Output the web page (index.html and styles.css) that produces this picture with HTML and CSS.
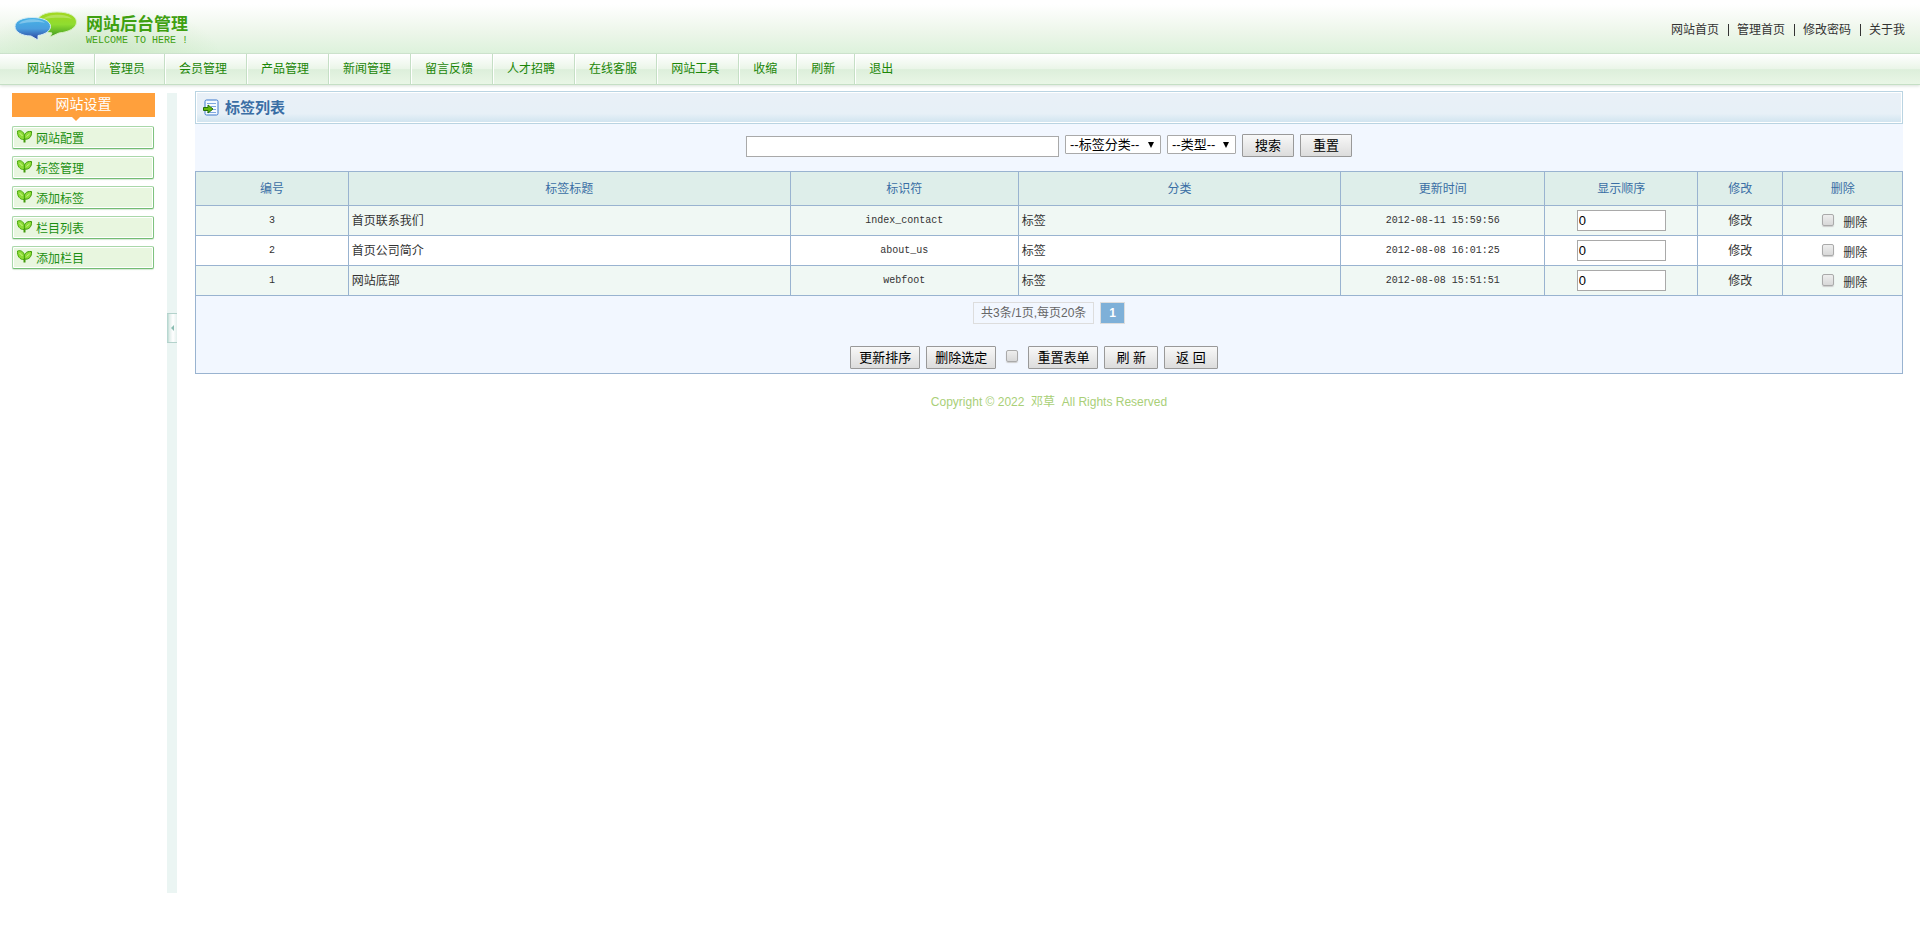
FILE: index.html
```html
<!DOCTYPE html>
<html lang="zh-CN">
<head>
<meta charset="utf-8">
<title>网站后台管理</title>
<link rel="stylesheet" href="styles.css">
</head>
<body>
<svg class="sprite" aria-hidden="true">
  <symbol id="leaf" viewBox="0 0 15 13">
    <path d="M7.500 12.500V8" stroke="#3f9a08" stroke-width="2" fill="none"/>
    <path d="M7 9.500C3 10 0 6 .5 1C4 -.3 8 2 7.500 8Z" fill="#8ddc35" stroke="#4aa80e"/>
    <path d="M7.500 9C6.500 4 9 1 14.500 1.500C15 6.500 12 10 7.500 9Z" fill="#8ddc35" stroke="#3f9a08"/>
    <path d="M2.500 3L5.500 6M12.500 4L9.500 6.500" stroke="#c9f58a" fill="none"/>
  </symbol>
</svg>
<header class="top">
  <a class="brand" href="#">
    <svg class="logo" viewBox="0 0 64 30" aria-hidden="true">
      <defs>
        <linearGradient id="g" x1="0" y1="0" x2="0" y2="1"><stop offset="0" stop-color="#a4d820"/><stop offset=".5" stop-color="#8fdc30"/><stop offset="1" stop-color="#3f9a20"/></linearGradient>
        <linearGradient id="b" x1="0" y1="0" x2="0" y2="1"><stop offset="0" stop-color="#45b4e6"/><stop offset=".5" stop-color="#4a9ede"/><stop offset="1" stop-color="#2a3f9c"/></linearGradient>
      </defs>
      <path d="M43 1C55 1 62.500 5 62.500 11C62.500 17 55 21 45 22L36 26L38 22C30 21 23 17 23 11C23 5 31 1 43 1Z" fill="url(#g)" stroke="#d6f0c0"/>
      <path d="M29 8C34 3 52 2 58 8C50 6 38 7 29 8Z" fill="#fff" opacity=".25"/>
      <path d="M18 6.500C29 6.500 36.500 10 36.500 15.500C36.500 20 31 23.500 24 24.500L24 29L17 25C8 25 1 21 1 15.500C1 10 8 6.500 18 6.500Z" fill="url(#b)" stroke="#d5ecf5"/>
      <path d="M5 13C9 7 26 7 31 12C25 10 13 11 5 13Z" fill="#fff" opacity=".3"/>
    </svg>
    <span class="brand-text"><strong>网站后台管理</strong><span class="mono">WELCOME TO HERE !</span></span>
  </a>
  <nav class="quick"><a href="#">网站首页</a><a href="#">管理首页</a><a href="#">修改密码</a><a href="#">关于我</a></nav>
</header>
<nav class="menu">
  <a href="#">网站设置</a><a href="#">管理员</a><a href="#">会员管理</a><a href="#">产品管理</a><a href="#">新闻管理</a><a href="#">留言反馈</a><a href="#">人才招聘</a><a href="#">在线客服</a><a href="#">网站工具</a><a href="#">收缩</a><a href="#">刷新</a><a href="#">退出</a>
</nav>
<div class="layout">
  <aside class="side">
    <h2>网站设置</h2>
    <a href="#"><svg aria-hidden="true"><use href="#leaf"/></svg>网站配置</a>
    <a href="#"><svg aria-hidden="true"><use href="#leaf"/></svg>标签管理</a>
    <a href="#"><svg aria-hidden="true"><use href="#leaf"/></svg>添加标签</a>
    <a href="#"><svg aria-hidden="true"><use href="#leaf"/></svg>栏目列表</a>
    <a href="#"><svg aria-hidden="true"><use href="#leaf"/></svg>添加栏目</a>
  </aside>
  <div class="splitter"><button type="button" aria-label="收缩"></button></div>
  <main class="main">
    <h1>
      <svg viewBox="0 0 16 17" aria-hidden="true">
        <rect x="2" y="1" width="13" height="15" rx="1.500" fill="#f4faff" stroke="#3d78cc"/>
        <path d="M4 4.500H13M8 7.500H13M10 10.500H13M4 13.500H13" stroke="#7ea8e0"/>
        <path d="M.5 8.500H5V6L10 10L5 14V11.500H.5Z" fill="#63b80d" stroke="#26700a"/>
      </svg>标签列表</h1>
    <form class="search">
      <input class="keyword" type="text" aria-label="关键字">
      <select class="kind" aria-label="标签分类"><option>--标签分类--</option></select>
      <select class="type" aria-label="类型"><option>--类型--</option></select>
      <button class="btn" type="button">搜索</button>
      <button class="btn" type="reset">重置</button>
    </form>
    <form class="list">
    <table>
      <colgroup><col class="c-id"><col class="c-title"><col class="c-key"><col class="c-cat"><col class="c-time"><col class="c-order"><col class="c-edit"><col class="c-del"></colgroup>
      <thead><tr><th>编号</th><th>标签标题</th><th>标识符</th><th>分类</th><th>更新时间</th><th>显示顺序</th><th>修改</th><th>删除</th></tr></thead>
      <tbody>
        <tr><td class="mono">3</td><td class="left">首页联系我们</td><td class="mono">index_contact</td><td class="left">标签</td><td class="mono">2012-08-11 15:59:56</td><td><input class="order" type="text" value="0" aria-label="显示顺序 3"></td><td><a href="#">修改</a></td><td><label class="del"><input type="checkbox"><span>删除</span></label></td></tr>
        <tr><td class="mono">2</td><td class="left">首页公司简介</td><td class="mono">about_us</td><td class="left">标签</td><td class="mono">2012-08-08 16:01:25</td><td><input class="order" type="text" value="0" aria-label="显示顺序 2"></td><td><a href="#">修改</a></td><td><label class="del"><input type="checkbox"><span>删除</span></label></td></tr>
        <tr><td class="mono">1</td><td class="left">网站底部</td><td class="mono">webfoot</td><td class="left">标签</td><td class="mono">2012-08-08 15:51:51</td><td><input class="order" type="text" value="0" aria-label="显示顺序 1"></td><td><a href="#">修改</a></td><td><label class="del"><input type="checkbox"><span>删除</span></label></td></tr>
      </tbody>
    </table>
    <div class="panel">
      <div class="pager"><span>共3条/1页,每页20条</span><b>1</b></div>
      <div class="actions">
        <button class="btn" type="button">更新排序</button>
        <button class="btn" type="button">删除选定</button>
        <input type="checkbox" aria-label="全选">
        <button class="btn" type="reset">重置表单</button>
        <button class="btn wide" type="button">刷 新</button>
        <button class="btn wide" type="button">返 回</button>
      </div>
    </div>
    </form>
    <footer>Copyright © 2022 &nbsp;邓草&nbsp; All Rights Reserved</footer>
  </main>
</div>
</body>
</html>
```

FILE: styles.css
```css
* { box-sizing: border-box; }
body { margin: 0; background: #fff; color: #333; font: 12px/18px "Liberation Sans", "Noto Sans CJK SC", sans-serif; }
a { color: inherit; text-decoration: none; }
input, select, button { font-family: inherit; margin: 0; }
.sprite { display: none; }
.mono { font-family: "Liberation Mono", "Noto Sans CJK SC", monospace; font-size: 10px; }

.top { display: flex; justify-content: space-between; align-items: center; height: 54px; padding: 2px 15px 0 14px; border-bottom: 1px solid #c9e2c9;
  background: radial-gradient(ellipse 120px 50px at 100px 54px, rgba(190, 225, 180, .6), transparent), linear-gradient(#fff 8%, #edf6ea 60%, #ddf2dc); }
.brand { display: flex; gap: 8px; color: #3fa010; }
.logo { width: 64px; height: 30px; }
.brand-text { display: flex; flex-direction: column; padding-top: 2px; }
.brand strong { font-size: 17px; line-height: 24px; }
.brand .mono { line-height: 8px; }
.quick { display: flex; padding-top: 4px; }
.quick a { line-height: 12px; }
.quick a + a { margin-left: 9px; padding-left: 8px; border-left: 1px solid #333; }

.menu { display: flex; height: 31px; padding-left: 10px; border-bottom: 1px solid #c5dfc5; color: #1c8608; box-shadow: 0 1px 3px #d8e0d8;
  background: linear-gradient(#fff, #eaf5e8 50%, #ddefdb 52%, #e9f6e6); }
.menu a { padding: 6px 19px 6px 14px; border-right: 1px solid #c5dfc5; box-shadow: 1px 0 #fff; }
.menu a:first-child { padding: 6px 19px 6px 17px; }
.menu a:last-child { border: 0; box-shadow: none; }

.layout { display: flex; align-items: flex-start; padding: 6px 17px 0 12px; }
.side { display: flex; flex-direction: column; gap: 7px; width: 143px; padding-top: 2px; color: #1c8f12; }
.side h2 { position: relative; height: 24px; margin: 0 0 2px; background: #ffa03c; color: #fff; font-size: 14px; font-weight: 400; line-height: 22px; text-align: center; }
.side h2::after { content: ""; position: absolute; left: 60px; top: 24px; border: 4px solid transparent; border-top-color: #ffa03c; }
.side a { display: flex; gap: 4px; height: 23px; width: 142px; padding-left: 4px; border: 1px solid #a9d8a9; border-bottom-color: #73bd73; border-right-color: #7fc27f; border-radius: 2px; background: #e8f6df; box-shadow: inset 0 0 0 1px #fff, 0 1px 1px #d5e8d5; line-height: 24px; }
.side svg { width: 15px; height: 13px; margin-top: 3px; }
.splitter { display: flex; flex-direction: column; width: 10px; height: 800px; margin: 2px 18px 0 12px; padding-top: 220px; background: #ebf5f3; }
.splitter button { display: flex; align-items: center; justify-content: center; height: 30px; padding: 0; border: solid #b3d2cb; border-width: 1px 0; background: linear-gradient(90deg, #b8d8d1 1px, #dcebe7 2px, #fff 60%, #e3f0ed); }
.splitter button::before { content: ""; border: solid transparent; border-width: 3px 3px 3px 0; border-right-color: #8bbdb2; }

.main { flex: 1; min-width: 0; }
.main h1 { display: flex; align-items: center; gap: 6px; height: 33px; margin: 0; padding-left: 7px; border: 1px solid #bad4e2; color: #3a6ea5; font-size: 15px; line-height: 30px; box-shadow: inset 0 0 0 1px #fff; background: linear-gradient(#e9f0f7, #e7f0f7 70%, #cfe3ef); }
.main h1 svg { width: 16px; height: 17px; }
.search { display: flex; justify-content: center; align-items: flex-start; gap: 6px; height: 47px; padding-top: 10px; background: #f2f7ff; }
.search .keyword { width: 313px; height: 21px; margin-top: 2px; border: 1px solid #a9a9a9; }
select { height: 19px; margin-top: 1px; padding: 0 18px 0 4px; border: 1px solid #a9a9a9; border-radius: 1px; appearance: none; color: #000; font-size: 13px; line-height: 17px;
  background: #fff url("data:image/svg+xml,%3Csvg xmlns='http://www.w3.org/2000/svg' width='6' height='6'%3E%3Cpath d='M0 0h6L3 6z'/%3E%3C/svg%3E") no-repeat right 6px center; }
.kind { width: 96px; }
.type { width: 69px; }
.btn { height: 23px; padding: 0 8px; border: 1px solid #999; border-radius: 1px; background: linear-gradient(#f8f8f8, #dcdcdc); color: #000; font-size: 13px; line-height: 20px; }
.search .btn { padding: 0 12px; }

table { width: 100%; border-collapse: collapse; table-layout: fixed; }
.c-id, .c-order { width: 8.95%; } .c-title { width: 25.9%; } .c-key { width: 13.35%; } .c-cat { width: 18.9%; } .c-time { width: 11.95%; } .c-edit { width: 5%; } .c-del { width: 7%; }
th, td { padding: 0 3px; border: 1px solid #99b3d0; text-align: center; }
th { height: 34px; background: #deeeea; color: #3a6ea5; font-weight: 400; }
td { height: 30px; }
tbody tr:nth-child(odd) { background: #f0f8f4; }
td.left { text-align: left; }
.order { display: block; width: 89px; height: 21px; margin: 0 auto; padding: 1px; border: 1px solid #a9a9a9; color: #000; font-size: 13px; }
input[type="checkbox"] { appearance: none; width: 12px; height: 12px; border: 1px solid #aaa; border-radius: 2px; background: linear-gradient(#eee, #d8d8d8); box-shadow: 0 1px 1px #ccc; }
.del { display: flex; justify-content: center; align-items: flex-start; gap: 9px; padding-left: 4px; }
.del input { margin-top: 5px; }
.del span { padding-top: 5px; }
.panel { display: flex; flex-direction: column; height: 78px; padding-top: 6px; gap: 22px; border: solid #99b3d0; border-width: 0 1px 1px; background: #f2f7ff; }
.pager, .actions { display: flex; justify-content: center; gap: 6px; }
.pager span, .pager b { height: 22px; padding: 0 7px; border: 1px solid #ddd; color: #666; line-height: 20px; }
.pager b { padding: 0 8px; background: #7eb0d8; color: #fff; }
.actions { padding-right: 30px; }
.actions input { margin: 4px 4px 0; }
.actions .wide { padding: 0 11px; }
footer { padding-top: 19px; text-align: center; color: #a9cf78; }
```
